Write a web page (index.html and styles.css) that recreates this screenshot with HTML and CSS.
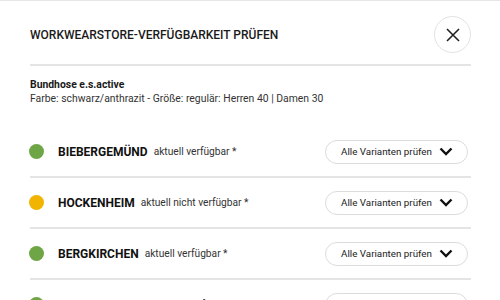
FILE: index.html
```html
<!DOCTYPE html>
<html lang="de">
<head>
  <meta charset="UTF-8">
  <title>Workwearstore-Verfügbarkeit prüfen</title>
  <link rel="stylesheet" href="styles.css">
</head>
<body>
  <div class="modal">
    <!-- Kopfzeile -->
    <div class="modal-head">
      <h1>WORKWEARSTORE-VERFÜGBARKEIT PRÜFEN</h1>
      <button class="close" aria-label="Schließen">
        <svg width="14" height="14" viewBox="0 0 14 14"><path d="M1 1L13 13M13 1L1 13" stroke="#222" stroke-width="1.6" fill="none"/></svg>
      </button>
    </div>

    <!-- Produkt -->
    <div class="product">
      <div class="product-name">Bundhose e.s.active</div>
      <div class="product-meta">Farbe: schwarz/anthrazit - Größe: regulär: Herren 40 | Damen 30</div>
    </div>

    <!-- Filialen -->
    <ul class="stores">
      <li class="store">
        <span class="dot green"></span>
        <span class="store-name">BIEBERGEMÜND</span>
        <span class="store-status">aktuell verfügbar *</span>
        <button class="variants"><span>Alle Varianten prüfen</span>
          <svg width="14" height="9" viewBox="0 0 14 9"><path d="M1.5 1.5L7 7L12.5 1.5" stroke="#111" stroke-width="2.4" fill="none"/></svg>
        </button>
      </li>
      <li class="store">
        <span class="dot yellow"></span>
        <span class="store-name">HOCKENHEIM</span>
        <span class="store-status">aktuell nicht verfügbar *</span>
        <button class="variants"><span>Alle Varianten prüfen</span>
          <svg width="14" height="9" viewBox="0 0 14 9"><path d="M1.5 1.5L7 7L12.5 1.5" stroke="#111" stroke-width="2.4" fill="none"/></svg>
        </button>
      </li>
      <li class="store">
        <span class="dot green"></span>
        <span class="store-name">BERGKIRCHEN</span>
        <span class="store-status">aktuell verfügbar *</span>
        <button class="variants"><span>Alle Varianten prüfen</span>
          <svg width="14" height="9" viewBox="0 0 14 9"><path d="M1.5 1.5L7 7L12.5 1.5" stroke="#111" stroke-width="2.4" fill="none"/></svg>
        </button>
      </li>
      <li class="store">
        <span class="dot green"></span>
        <span class="store-name">GROSSOSTHEIM</span>
        <span class="store-status">aktuell verfügbar *</span>
        <button class="variants"><span>Alle Varianten prüfen</span>
          <svg width="14" height="9" viewBox="0 0 14 9"><path d="M1.5 1.5L7 7L12.5 1.5" stroke="#111" stroke-width="2.4" fill="none"/></svg>
        </button>
      </li>
    </ul>
  </div>
</body>
</html>
```

FILE: styles.css
```css
body {
  margin: 0;
  padding: 0;
  font-family: Roboto, 'Liberation Sans', sans-serif;
  background: #fff;
  color: #222;
  overflow: hidden;
}

.modal {
  border-top: 1px solid #e6e6e6;
  padding: 0 29px 0 30px;
}

/* Kopfzeile */
.modal-head {
  display: flex;
  align-items: center;
  justify-content: space-between;
  padding: 15px 0 11px;
  border-bottom: 2px solid #e4e4e4;
}

.modal-head h1 {
  margin: 0;
  font-size: 12px;
  font-weight: 500;
  letter-spacing: 0;
  color: #1a1a1a;
}

.close {
  width: 37px;
  height: 37px;
  border-radius: 50%;
  border: 1px solid #e2e2e2;
  background: #fff;
  display: flex;
  align-items: center;
  justify-content: center;
  padding: 0;
  cursor: pointer;
}

/* Produkt */
.product {
  padding: 12px 0 21px;
  font-size: 10.4px;
  line-height: 14px;
}

.product-name {
  font-weight: 700;
  color: #1a1a1a;
}

.product-meta {
  color: #333;
}

/* Filialen */
.stores {
  list-style: none;
  margin: 0;
  padding: 0;
}

.store {
  display: flex;
  align-items: center;
  height: 49px;
  border-bottom: 2px solid #e4e4e4;
}

.dot {
  width: 15px;
  height: 15px;
  border-radius: 50%;
  flex-shrink: 0;
  margin-left: -1px;
}

.dot.green {
  background: #6ea646;
}

.dot.yellow {
  background: #f1b400;
}

.store-name {
  margin-left: 14px;
  font-size: 12px;
  font-weight: 700;
  color: #111;
}

.store-status {
  margin-left: 6px;
  font-size: 10.2px;
  color: #333;
}

.variants {
  margin-left: auto;
  margin-right: 3px;
  width: 143px;
  height: 24px;
  box-sizing: border-box;
  border: 1px solid #dcdcdc;
  border-radius: 12px;
  background: #fff;
  font-family: Roboto, 'Liberation Sans', sans-serif;
  font-size: 9.8px;
  color: #222;
  white-space: nowrap;
  display: flex;
  align-items: center;
  justify-content: space-between;
  padding: 0 14px 0 15px;
  cursor: pointer;
}
```
